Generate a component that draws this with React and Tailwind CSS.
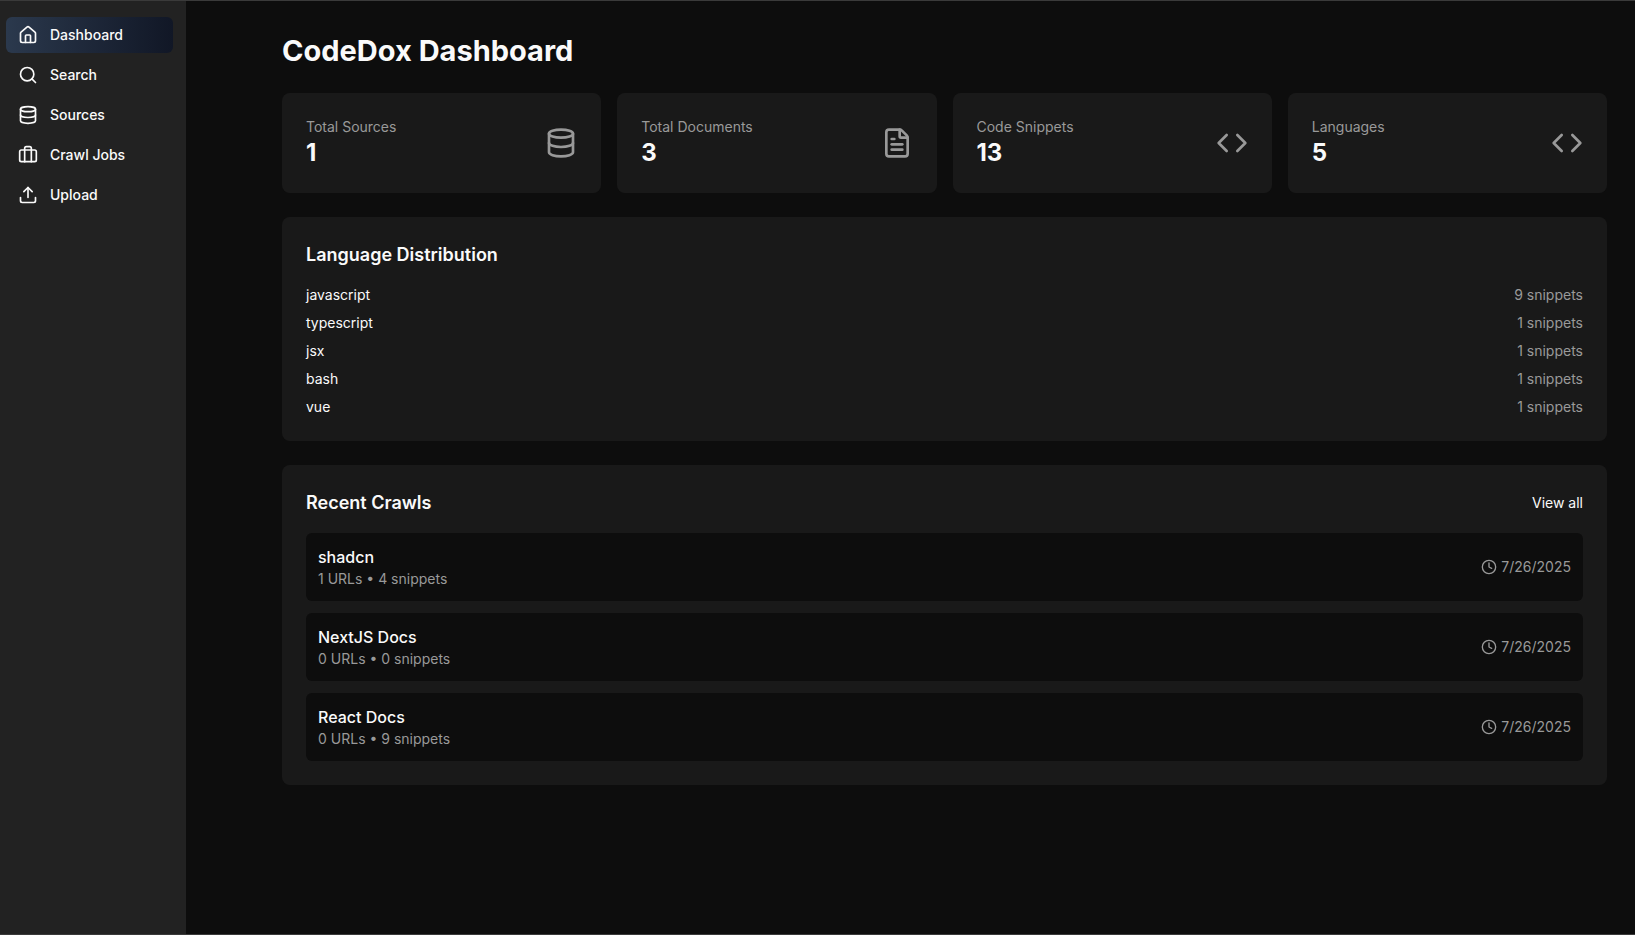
import {
  House,
  Search,
  Database,
  Briefcase,
  Upload,
  FileText,
  Code,
  Clock,
} from "lucide-react";

const navItems = [
  { label: "Dashboard", icon: House, active: true },
  { label: "Search", icon: Search },
  { label: "Sources", icon: Database },
  { label: "Crawl Jobs", icon: Briefcase },
  { label: "Upload", icon: Upload },
];

const stats = [
  { label: "Total Sources", value: 1, icon: Database },
  { label: "Total Documents", value: 3, icon: FileText },
  { label: "Code Snippets", value: 13, icon: Code },
  { label: "Languages", value: 5, icon: Code },
];

const languages = [
  { name: "javascript", count: 9 },
  { name: "typescript", count: 1 },
  { name: "jsx", count: 1 },
  { name: "bash", count: 1 },
  { name: "vue", count: 1 },
];

const crawls = [
  { name: "shadcn", urls: 1, snippets: 4, date: "7/26/2025" },
  { name: "NextJS Docs", urls: 0, snippets: 0, date: "7/26/2025" },
  { name: "React Docs", urls: 0, snippets: 9, date: "7/26/2025" },
];

function Sidebar() {
  return (
    <aside className="w-[186px] shrink-0 bg-[#222222] py-4 pl-1.5 pr-[13px]">
      <nav className="flex flex-col gap-1">
        {navItems.map(({ label, icon: Icon, active }) => (
          <a
            key={label}
            href="#"
            aria-current={active ? "page" : undefined}
            className={
              active
                ? "flex h-9 items-center gap-3 rounded-md bg-linear-to-r from-[#2b394d] to-[#111726] px-3 text-sm font-medium"
                : "flex h-9 items-center gap-3 rounded-md px-3 text-sm font-medium"
            }
          >
            <Icon size={20} aria-hidden="true" />
            {label}
          </a>
        ))}
      </nav>
    </aside>
  );
}

function StatCard({ label, value, icon: Icon }) {
  return (
    <div className="flex items-center justify-between rounded-lg bg-[#191919] p-6">
      <div>
        <p className="text-sm text-[#999999]">{label}</p>
        <p className="text-2xl font-bold">{value}</p>
      </div>
      <Icon size={32} className="text-[#999999]" aria-hidden="true" />
    </div>
  );
}

export default function App() {
  return (
    <div className="flex min-h-screen border-y border-[#3a3a3a] bg-[#0d0d0d] font-['Inter',sans-serif] text-[#fafafa]">
      <Sidebar />
      <main className="min-w-0 flex-1 space-y-6 py-8 pl-24 pr-7">
        <h1 className="text-[29px]/9 font-bold">CodeDox Dashboard</h1>

        <section className="grid grid-cols-4 gap-4" aria-label="Statistics">
          {stats.map((stat) => (
            <StatCard key={stat.label} {...stat} />
          ))}
        </section>

        <section className="rounded-lg bg-[#191919] p-6">
          <h2 className="mb-4 text-lg/7 font-semibold">Language Distribution</h2>
          <ul className="space-y-2 text-sm">
            {languages.map(({ name, count }) => (
              <li key={name} className="flex items-center justify-between">
                <span>{name}</span>
                <span className="text-[#999999]">{count} snippets</span>
              </li>
            ))}
          </ul>
        </section>

        <section className="rounded-lg bg-[#191919] p-6">
          <div className="mb-4 flex items-center justify-between">
            <h2 className="text-lg/7 font-semibold">Recent Crawls</h2>
            <a href="#" className="text-sm">
              View all
            </a>
          </div>
          <ul className="space-y-3">
            {crawls.map(({ name, urls, snippets, date }) => (
              <li key={name}>
                <a
                  href="#"
                  className="flex items-center justify-between rounded-md bg-[#0d0d0d] p-3"
                >
                  <div>
                    <p className="font-medium">{name}</p>
                    <p className="text-sm text-[#999999]">
                      {urls} URLs • {snippets} snippets
                    </p>
                  </div>
                  <div className="flex items-center gap-1 text-sm text-[#999999]">
                    <Clock size={16} aria-hidden="true" />
                    <span>{date}</span>
                  </div>
                </a>
              </li>
            ))}
          </ul>
        </section>
      </main>
    </div>
  );
}
